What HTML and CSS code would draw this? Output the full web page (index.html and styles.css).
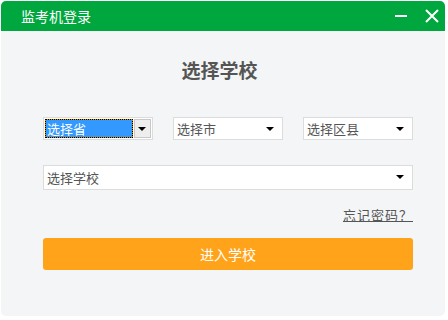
FILE: index.html
```html
<!DOCTYPE html>
<html lang="zh-CN">
<head>
    <meta charset="UTF-8">
    <title>监考机登录</title>
    <link rel="stylesheet" href="styles.css">
</head>
<body>
    <div class="win">
        <div class="win-head">
            <span class="win-title">监考机登录</span>
            <div class="win-btns">
                <svg class="btn-min" width="14" height="14" viewBox="0 0 14 14"><rect x="1" y="6" width="12" height="2" fill="#fff"/></svg>
                <svg class="btn-close" width="16" height="16" viewBox="0 0 16 16"><path d="M2 2 L14 14 M14 2 L2 14" stroke="#fff" stroke-width="2"/></svg>
            </div>
        </div>
        <div class="win-body">
            <h2 class="title">选择学校</h2>
            <div class="row">
                <div class="sel sel-focus">
                    <span class="sel-hl">选择省</span>
                    <span class="sel-btn"><i class="arr"></i></span>
                </div>
                <div class="sel"><span class="sel-txt">选择市</span><i class="arr"></i></div>
                <div class="sel"><span class="sel-txt">选择区县</span><i class="arr"></i></div>
            </div>
            <div class="sel sel-wide"><span class="sel-txt">选择学校</span><i class="arr"></i></div>
            <div class="forget"><a href="#">忘记密码？</a></div>
            <button class="enter">进入学校</button>
        </div>
    </div>
</body>
</html>
```

FILE: styles.css
```css
body{
    margin: 0;
    background-color: #fff;
    font-family: "Noto Sans CJK SC", "Noto Sans", sans-serif;
}
.win{
    margin: 1px 0 0 1px;
    width: 444px;
    height: 315px;
    border-radius: 5px;
    overflow: hidden;
    background-color: #f4f5f7;
}
.win-head{
    height: 30px;
    background-color: #00a73e;
    display: flex;
    align-items: center;
    justify-content: space-between;
    padding: 0 5px 0 20px;
}
.win-title{
    color: #fff;
    font-size: 14px;
}
.win-btns{
    display: flex;
    align-items: center;
    gap: 16px;
}
.win-body{
    padding: 0 32px 0 42px;
}
.title{
    margin: 0;
    padding: 25px 17px 0 0;
    height: 28px;
    line-height: 28px;
    text-align: center;
    font-size: 19px;
    font-weight: bold;
    color: #555;
}
.row{
    display: flex;
    gap: 20px;
    margin-top: 33px;
}
.sel{
    position: relative;
    width: 110px;
    height: 23px;
    box-sizing: border-box;
    border: 1px solid #dcdcdc;
    background-color: #fff;
    display: flex;
    align-items: center;
    font-size: 13px;
    color: #555;
}
.sel-txt{
    padding-left: 3px;
}
.arr{
    position: absolute;
    right: 8px;
    top: 9px;
    width: 0;
    height: 0;
    border-left: 4px solid transparent;
    border-right: 4px solid transparent;
    border-top: 4px solid #000;
}
.sel-focus{
    padding: 1px;
    gap: 1px;
}
.sel-hl{
    flex: 1;
    height: 100%;
    box-sizing: border-box;
    background-color: #3399ff;
    color: #fff;
    outline: 1px dotted #000;
    outline-offset: -1px;
    border: 1px solid #e08a00;
    display: flex;
    align-items: center;
    padding-left: 1px;
}
.sel-btn{
    position: relative;
    width: 17px;
    height: 100%;
    box-sizing: border-box;
    background-color: #eee;
    border: 1px solid #c8c8c8;
}
.sel-btn .arr{
    right: 4px;
    top: 7px;
}
.sel-wide{
    width: 370px;
    height: 25px;
    margin-top: 25px;
}
.forget{
    text-align: right;
    margin-top: 13px;
    height: 20px;
    line-height: 20px;
}
.forget a{
    font-size: 13px;
    color: #555;
    letter-spacing: 1px;
    text-decoration: underline;
}
.enter{
    display: block;
    margin-top: 15px;
    width: 370px;
    height: 32px;
    border: none;
    border-radius: 3px;
    background-color: #ffa31a;
    color: #fff;
    font-size: 14px;
    font-family: inherit;
}
```
